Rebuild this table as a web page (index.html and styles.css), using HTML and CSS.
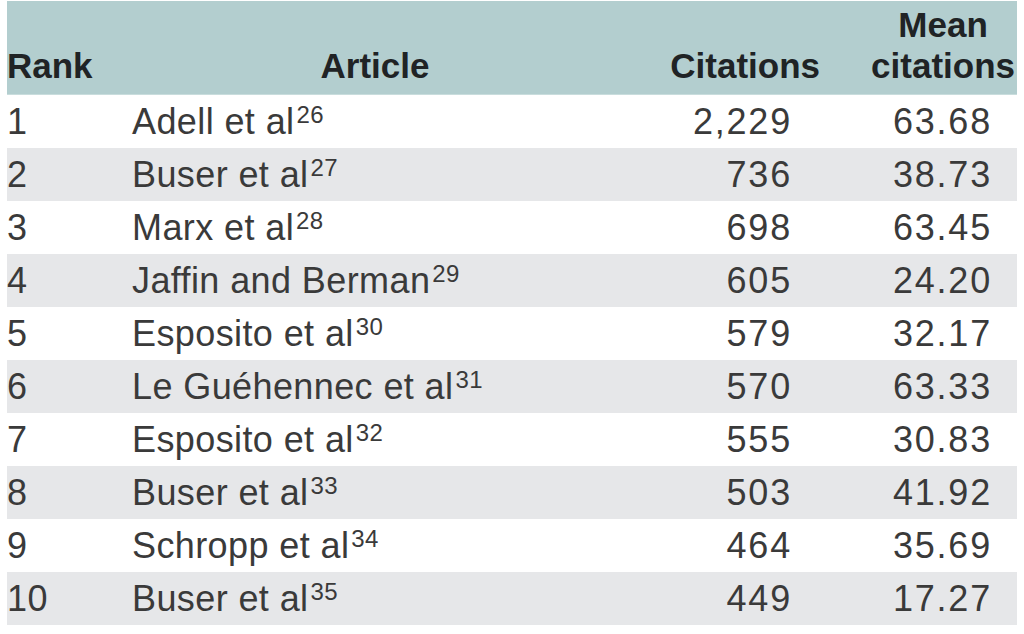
FILE: index.html
```html
<!DOCTYPE html>
<html lang="en">
<head>
<meta charset="utf-8">
<title>Top cited articles</title>
<link rel="stylesheet" href="styles.css">
</head>
<body>
<div class="table">
  <div class="row head">
    <div class="cell rank">Rank</div>
    <div class="cell article">Article</div>
    <div class="cell cites">Citations</div>
    <div class="cell mean"><span class="stack">Mean<br>citations</span></div>
  </div>
  <div class="row">
    <div class="cell rank">1</div>
    <div class="cell article">Adell et al<sup class="ref">26</sup></div>
    <div class="cell cites">2,229</div>
    <div class="cell mean">63.68</div>
  </div>
  <div class="row alt">
    <div class="cell rank">2</div>
    <div class="cell article">Buser et al<sup class="ref">27</sup></div>
    <div class="cell cites">736</div>
    <div class="cell mean">38.73</div>
  </div>
  <div class="row">
    <div class="cell rank">3</div>
    <div class="cell article">Marx et al<sup class="ref">28</sup></div>
    <div class="cell cites">698</div>
    <div class="cell mean">63.45</div>
  </div>
  <div class="row alt">
    <div class="cell rank">4</div>
    <div class="cell article">Jaffin and Berman<sup class="ref">29</sup></div>
    <div class="cell cites">605</div>
    <div class="cell mean">24.20</div>
  </div>
  <div class="row">
    <div class="cell rank">5</div>
    <div class="cell article">Esposito et al<sup class="ref">30</sup></div>
    <div class="cell cites">579</div>
    <div class="cell mean">32.17</div>
  </div>
  <div class="row alt">
    <div class="cell rank">6</div>
    <div class="cell article">Le Guéhennec et al<sup class="ref">31</sup></div>
    <div class="cell cites">570</div>
    <div class="cell mean">63.33</div>
  </div>
  <div class="row">
    <div class="cell rank">7</div>
    <div class="cell article">Esposito et al<sup class="ref">32</sup></div>
    <div class="cell cites">555</div>
    <div class="cell mean">30.83</div>
  </div>
  <div class="row alt">
    <div class="cell rank">8</div>
    <div class="cell article">Buser et al<sup class="ref">33</sup></div>
    <div class="cell cites">503</div>
    <div class="cell mean">41.92</div>
  </div>
  <div class="row">
    <div class="cell rank">9</div>
    <div class="cell article">Schropp et al<sup class="ref">34</sup></div>
    <div class="cell cites">464</div>
    <div class="cell mean">35.69</div>
  </div>
  <div class="row alt">
    <div class="cell rank">10</div>
    <div class="cell article">Buser et al<sup class="ref">35</sup></div>
    <div class="cell cites">449</div>
    <div class="cell mean">17.27</div>
  </div>
</div>
</body>
</html>
```
FILE: styles.css
```css
html, body {
  margin: 0;
  padding: 0;
  background: #ffffff;
}

body {
  font-family: "Liberation Sans", Arial, sans-serif;
  color: #3a3a3a;
}

.table {
  margin: 1px 0 0 7px;
  width: 1010px;
}

.row {
  display: grid;
  grid-template-columns: 118px 500px 197px 195px;
  height: 53px;
  font-size: 36px;
  line-height: 53px;
  letter-spacing: 0.4px;
}

.row.alt {
  background: #e6e7e9;
}

.row.head {
  height: 94px;
  background: #b3cecf;
  color: #202325;
  font-weight: bold;
  font-size: 35px;
  line-height: 41px;
  letter-spacing: 0;
  align-items: end;
  box-sizing: border-box;
  border-bottom: 1px solid #c9dddd;
}

.cell {
  white-space: nowrap;
}

.head .cell {
  padding-bottom: 8px;
}

.rank {
  padding-left: 0;
}

.article {
  padding-left: 7px;
}

.head .article {
  padding-left: 0;
  text-align: center;
}

.cites {
  text-align: right;
  padding-right: 30px;
  letter-spacing: 1.8px;
}

.head .cites {
  padding-right: 2px;
  letter-spacing: 0;
}

.mean {
  text-align: right;
  padding-right: 25px;
  letter-spacing: 1.8px;
}

.head .mean {
  padding-right: 2px;
  letter-spacing: 0;
}

.stack {
  display: inline-block;
  text-align: center;
}

.ref {
  font-size: 24px;
  line-height: 0;
  vertical-align: 11px;
  margin-left: 2px;
  letter-spacing: 0.4px;
}
```
